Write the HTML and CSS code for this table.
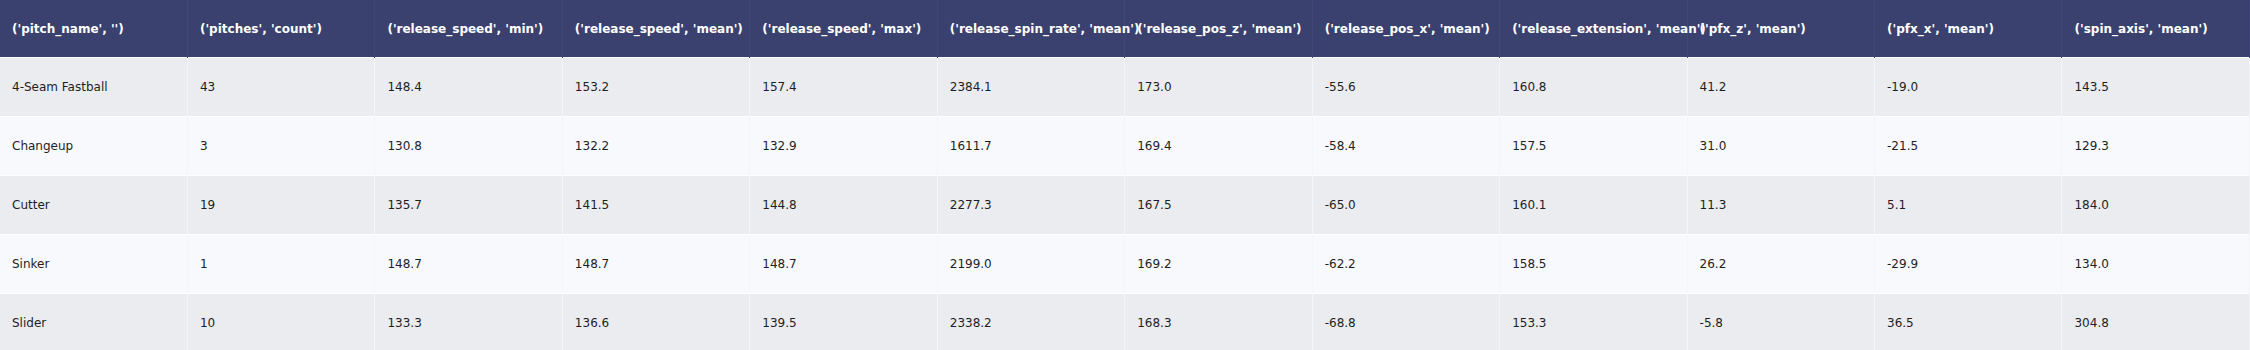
FILE: index.html
```html
<!DOCTYPE html>
<html lang="en">
<head>
    <meta charset="UTF-8">
    <title>Pitch summary</title>
    <link rel="stylesheet" href="styles.css">
</head>
<body>

<table class="pitch-table">
    <thead>
        <tr>
            <th>('pitch_name', '')</th>
            <th>('pitches', 'count')</th>
            <th>('release_speed', 'min')</th>
            <th>('release_speed', 'mean')</th>
            <th>('release_speed', 'max')</th>
            <th>('release_spin_rate', 'mean')</th>
            <th>('release_pos_z', 'mean')</th>
            <th>('release_pos_x', 'mean')</th>
            <th>('release_extension', 'mean')</th>
            <th>('pfx_z', 'mean')</th>
            <th>('pfx_x', 'mean')</th>
            <th>('spin_axis', 'mean')</th>
        </tr>
    </thead>
    <tbody>
        <tr>
            <td>4-Seam Fastball</td><td>43</td><td>148.4</td><td>153.2</td><td>157.4</td><td>2384.1</td>
            <td>173.0</td><td>-55.6</td><td>160.8</td><td>41.2</td><td>-19.0</td><td>143.5</td>
        </tr>
        <tr>
            <td>Changeup</td><td>3</td><td>130.8</td><td>132.2</td><td>132.9</td><td>1611.7</td>
            <td>169.4</td><td>-58.4</td><td>157.5</td><td>31.0</td><td>-21.5</td><td>129.3</td>
        </tr>
        <tr>
            <td>Cutter</td><td>19</td><td>135.7</td><td>141.5</td><td>144.8</td><td>2277.3</td>
            <td>167.5</td><td>-65.0</td><td>160.1</td><td>11.3</td><td>5.1</td><td>184.0</td>
        </tr>
        <tr>
            <td>Sinker</td><td>1</td><td>148.7</td><td>148.7</td><td>148.7</td><td>2199.0</td>
            <td>169.2</td><td>-62.2</td><td>158.5</td><td>26.2</td><td>-29.9</td><td>134.0</td>
        </tr>
        <tr>
            <td>Slider</td><td>10</td><td>133.3</td><td>136.6</td><td>139.5</td><td>2338.2</td>
            <td>168.3</td><td>-68.8</td><td>153.3</td><td>-5.8</td><td>36.5</td><td>304.8</td>
        </tr>
    </tbody>
</table>

</body>
</html>
```

FILE: styles.css
```css
body {
    margin: 0;
    padding: 0;
    font-family: Verdana, "DejaVu Sans", sans-serif;
    font-size: 12px;
    color: #1e1e1e;
    background-color: #f8f9fc;
}

.pitch-table {
    width: 100%;
    table-layout: fixed;
    border-collapse: collapse;
}

.pitch-table th,
.pitch-table td {
    text-align: left;
    padding: 0 12px;
    white-space: nowrap;
    overflow: visible;
}

/* Header row */
.pitch-table th {
    height: 57px;
    background-color: #3b416e;
    color: #fff;
    font-weight: bold;
    border-right: 1px solid #40467a;
}

.pitch-table td {
    height: 58px;
    border-right: 1px solid #f4f5f8;
    border-top: 1px solid #fff;
}

/* Striped rows */
.pitch-table tbody tr:nth-child(odd) td {
    background-color: #ebecf0;
}

.pitch-table tbody tr:nth-child(even) td {
    background-color: #f8f9fc;
}
```
